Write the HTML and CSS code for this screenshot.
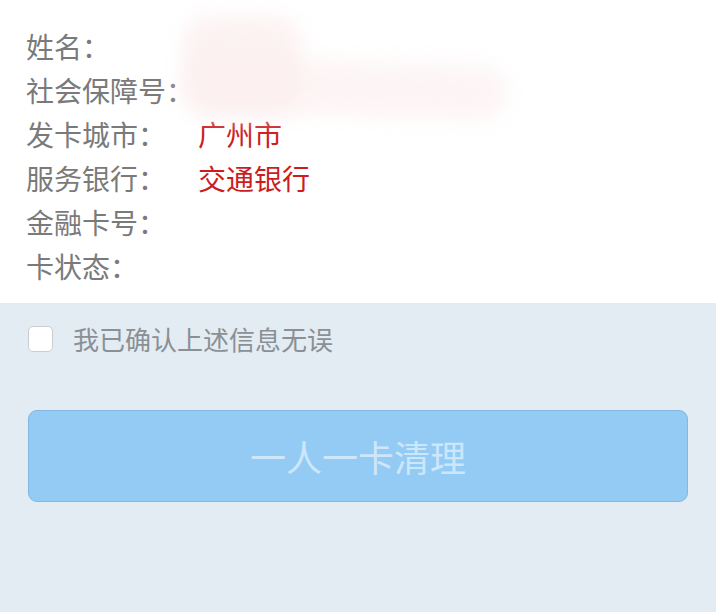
FILE: index.html
```html
<!DOCTYPE html>
<html lang="zh-CN">
<head>
<meta charset="utf-8">
<title>一人一卡清理</title>
<link rel="stylesheet" href="styles.css">
</head>
<body>
<section class="info">
  <div class="row"><span class="label">姓名：</span><span class="value"></span></div>
  <div class="row"><span class="label">社会保障号：</span><span class="value"></span></div>
  <div class="row"><span class="label">发卡城市：</span><span class="value red">广州市</span></div>
  <div class="row"><span class="label">服务银行：</span><span class="value red">交通银行</span></div>
  <div class="row"><span class="label">金融卡号：</span><span class="value"></span></div>
  <div class="row"><span class="label">卡状态：</span><span class="value"></span></div>
  <div class="blur blur-a"></div>
  <div class="blur blur-b"></div>
</section>
<section class="actions">
  <label class="confirm"><span class="box"></span><span class="confirm-text">我已确认上述信息无误</span></label>
  <button class="submit" type="button">一人一卡清理</button>
</section>
</body>
</html>
```
FILE: styles.css
```css
html, body {
  margin: 0;
  padding: 0;
}
body {
  width: 716px;
  height: 612px;
  background: #e2ecf2;
  font-family: "Noto Sans CJK SC", "Noto Sans", sans-serif;
  overflow: hidden;
}
.info {
  position: relative;
  background: #ffffff;
  padding: 24px 0 14px 26px;
  height: 265px;
}
.row {
  display: grid;
  grid-template-columns: 172px 1fr;
  height: 44px;
  line-height: 44px;
  font-size: 28px;
}
.label {
  color: #7a7a7a;
  white-space: nowrap;
}
.value.red {
  color: #cc1c1e;
}
.blur {
  position: absolute;
  background: #fcefef;
  filter: blur(10px);
  border-radius: 30px;
  opacity: 0.8;
}
.blur-a {
  left: 182px;
  top: 16px;
  width: 120px;
  height: 100px;
}
.blur-b {
  left: 188px;
  top: 60px;
  width: 320px;
  height: 56px;
  border-radius: 40px 60px 60px 40px;
  transform: rotate(2deg);
  opacity: 0.6;
}
.actions {
  padding: 22px 28px 0 28px;
}
.confirm {
  display: flex;
  align-items: center;
  gap: 20px;
  height: 28px;
}
.box {
  width: 23px;
  height: 24px;
  border: 1px solid #c9cdd1;
  border-radius: 5px;
  background: #ffffff;
  flex: none;
}
.confirm-text {
  font-size: 26px;
  color: #8a9096;
  line-height: 28px;
}
.submit {
  display: block;
  margin-top: 57px;
  width: 660px;
  height: 92px;
  background: #94cbf5;
  border: 1px solid #83b7e0;
  border-radius: 9px;
  color: rgba(255, 255, 255, 0.55);
  font-family: "Noto Sans CJK SC", "Noto Sans", sans-serif;
  font-size: 36px;
  padding: 0;
}
```
